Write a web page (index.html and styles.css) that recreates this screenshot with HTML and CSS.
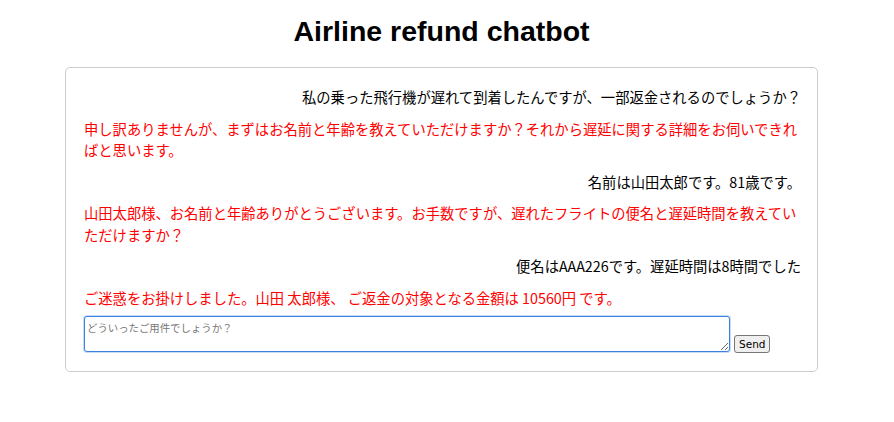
FILE: index.html
```html
<!DOCTYPE html>
<html lang="ja">
<head>
<meta charset="utf-8">
<title>Airline refund chatbot</title>
<link rel="stylesheet" href="styles.css">
</head>
<body>
<div class="page">
  <h1 class="title">Airline refund chatbot</h1>
  <div class="card">
    <div class="messages">
      <p class="msg user">私の乗った飛行機が遅れて到着したんですが、一部返金されるのでしょうか？</p>
      <p class="msg bot">申し訳ありませんが、まずはお名前と年齢を教えていただけますか？それから遅延に関する詳細をお伺いできればと思います。</p>
      <p class="msg user">名前は山田太郎です。81歳です。</p>
      <p class="msg bot">山田太郎様、お名前と年齢ありがとうございます。お手数ですが、遅れたフライトの便名と遅延時間を教えていただけますか？</p>
      <p class="msg user">便名はAAA226です。遅延時間は8時間でした</p>
      <p class="msg bot">ご迷惑をお掛けしました。山田 太郎様、 ご返金の対象となる金額は 10560円 です。</p>
    </div>
    <div class="composer">
      <textarea class="input" placeholder="どういったご用件でしょうか？"></textarea>
      <button class="send">Send</button>
    </div>
  </div>
</div>
</body>
</html>
```

FILE: styles.css
```css
html, body {
  margin: 0;
  padding: 0;
  background: #ffffff;
}
.page {
  width: 883px;
  display: flex;
  flex-direction: column;
  align-items: center;
  padding-top: 15px;
  font-family: "Noto Sans CJK JP", "Liberation Sans", sans-serif;
}
.title {
  margin: 0 0 20px 0;
  font-family: "Liberation Sans", Arial, sans-serif;
  font-size: 28.5px;
  line-height: 32px;
  font-weight: bold;
  color: #000;
}
.card {
  width: 753px;
  box-sizing: border-box;
  border: 1px solid #cccccc;
  border-radius: 5px;
  padding: 18px 16px 19px 18px;
}
.messages {
  display: flex;
  flex-direction: column;
  gap: 10px;
}
.msg {
  margin: 0;
  font-size: 14.3px;
  line-height: 21.5px;
}
.user {
  text-align: right;
  color: #000;
}
.bot {
  text-align: left;
  color: #ff0000;
}
.composer {
  margin-top: 8px;
  display: flex;
  align-items: flex-end;
  gap: 4px;
}
.input {
  width: 646px;
  height: 36px;
  box-sizing: border-box;
  margin: 0;
  padding: 4px 2px 2px 2px;
  border: 1px solid #3b82e0;
  border-radius: 3px;
  box-shadow: 0 0 0 1px #c7dcf7;
  font-family: "Noto Sans CJK JP", sans-serif;
  font-size: 10.4px;
  line-height: 14px;
  resize: both;
  outline: none;
}
.input::placeholder {
  color: #777;
}
.send {
  margin: 0 0 -1px 0;
  height: 18px;
  padding: 0 4px;
  box-sizing: border-box;
  font-family: "DejaVu Sans", sans-serif;
  font-size: 10.5px;
  color: #000;
  background: #efefef;
  border: 1px solid #767676;
  border-radius: 3px;
}
```
